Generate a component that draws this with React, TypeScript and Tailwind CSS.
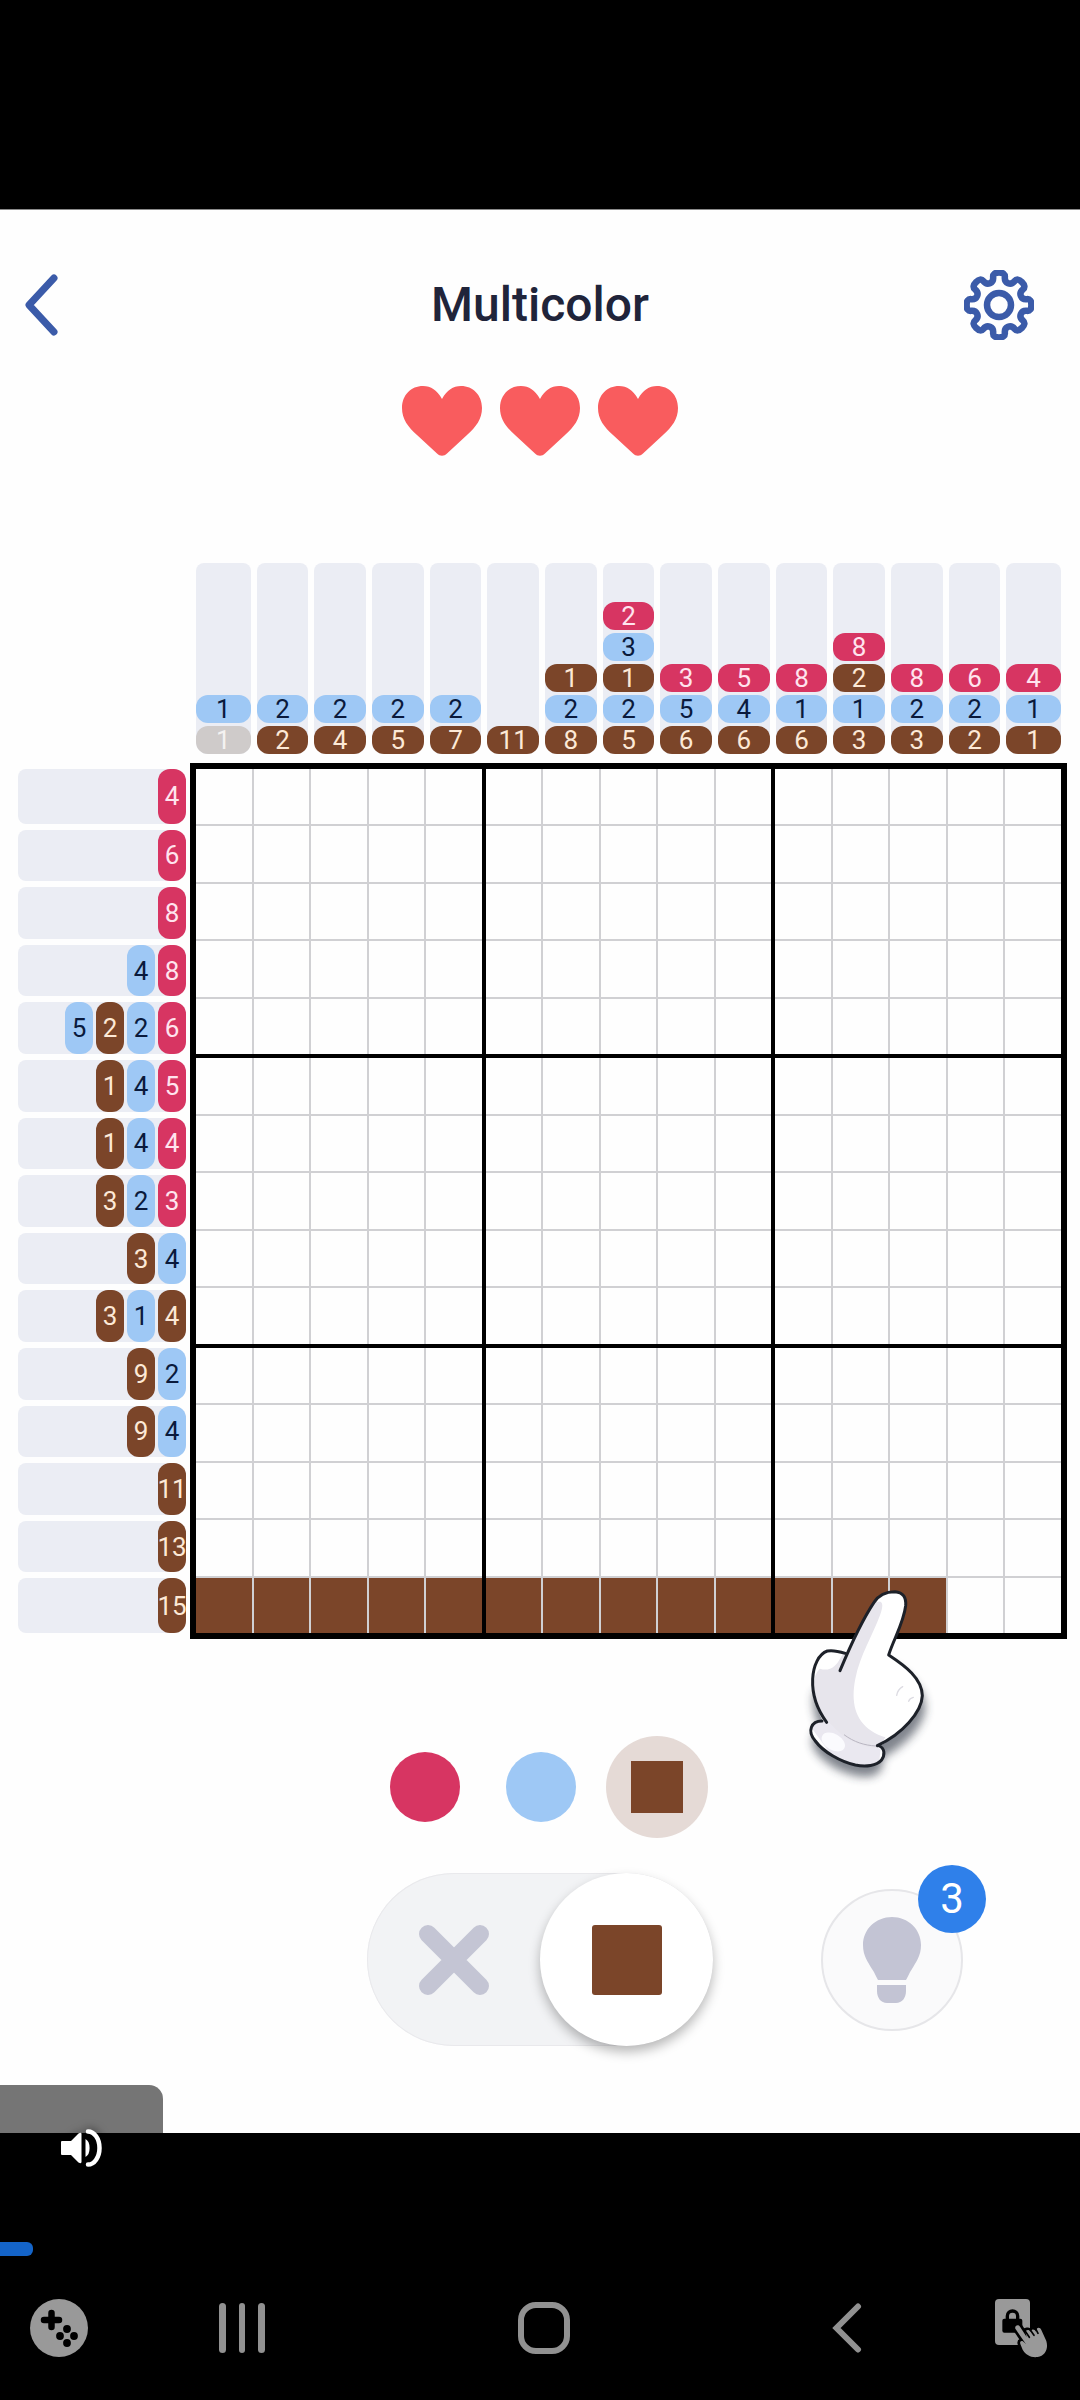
import React, { useState } from "react";

type Tone = "pink" | "blue" | "brown" | "done";
type Clue = [number, Tone];

const P = (n: number): Clue => [n, "pink"];
const B = (n: number): Clue => [n, "blue"];
const N = (n: number): Clue => [n, "brown"];
const D = (n: number): Clue => [n, "done"];

const columnClues: Clue[][] = [
  [B(1), D(1)],
  [B(2), N(2)],
  [B(2), N(4)],
  [B(2), N(5)],
  [B(2), N(7)],
  [N(11)],
  [N(1), B(2), N(8)],
  [P(2), B(3), N(1), B(2), N(5)],
  [P(3), B(5), N(6)],
  [P(5), B(4), N(6)],
  [P(8), B(1), N(6)],
  [P(8), N(2), B(1), N(3)],
  [P(8), B(2), N(3)],
  [P(6), B(2), N(2)],
  [P(4), B(1), N(1)],
];

const rowClues: Clue[][] = [
  [P(4)],
  [P(6)],
  [P(8)],
  [B(4), P(8)],
  [B(5), N(2), B(2), P(6)],
  [N(1), B(4), P(5)],
  [N(1), B(4), P(4)],
  [N(3), B(2), P(3)],
  [N(3), B(4)],
  [N(3), B(1), N(4)],
  [N(9), B(2)],
  [N(9), B(4)],
  [N(11)],
  [N(13)],
  [N(15)],
];

const toneClass: Record<Tone, string> = {
  pink: "bg-[#d73562] text-[#ffe4ee]",
  blue: "bg-[#9ec8f5] text-[#0a1a3c]",
  brown: "bg-[#7b4529] text-[#fde9d6]",
  done: "bg-[#cfcbca] text-[#f4f2f1]",
};

const SIZE = 15;
const BLOCK = 5;

function gearPath(): string {
  const pts: [number, number][] = [];
  for (let i = 0; i < 8; i++) {
    const base = i * 45 - 90;
    const corners: [number, number][] = [
      [33, -11],
      [33, 11],
      [24, 13],
      [24, 32],
    ];
    for (const [r, a] of corners) {
      const t = ((base + a) * Math.PI) / 180;
      pts.push([35 + r * Math.cos(t), 35 + r * Math.sin(t)]);
    }
  }
  const mid = (a: [number, number], b: [number, number]) =>
    `${((a[0] + b[0]) / 2).toFixed(2)} ${((a[1] + b[1]) / 2).toFixed(2)}`;
  let d = `M${mid(pts[pts.length - 1], pts[0])}`;
  pts.forEach((p, i) => {
    d += `Q${p[0].toFixed(2)} ${p[1].toFixed(2)} ${mid(p, pts[(i + 1) % pts.length])}`;
  });
  return d + "Z";
}

function Header() {
  return (
    <header className="flex items-center justify-between pt-[60px] pr-[46px] pl-[22px]">
      <button aria-label="Back" className="flex h-[70px] w-[70px] items-center text-[#3b5ba9]">
        <svg width="38" height="66" viewBox="0 0 38 66" fill="none" stroke="currentColor" strokeWidth="7" strokeLinecap="round" strokeLinejoin="round">
          <path d="M32 6 7 33 32 60" />
        </svg>
      </button>
      <h1 className="pl-[24px] text-[48px] leading-[70px] font-medium text-[#20243a]">Multicolor</h1>
      <button aria-label="Settings" className="text-[#3b5ba9]">
        <svg width="70" height="70" viewBox="0 0 70 70" fill="none" stroke="currentColor" strokeWidth="6.500" strokeLinejoin="round">
          <path d={gearPath()} />
          <circle cx="35" cy="35" r="12" />
        </svg>
      </button>
    </header>
  );
}

function Heart() {
  return (
    <svg width="80" height="70" viewBox="0 0 80 70" fill="#f95c5e" aria-hidden="true">
      <path d="M40 13C35 4 29 0 21 0 9 0 0 9 0 22c0 11 6 19 15 27l20 18.500c3 3 7 3 10 0L65 49c9-8 15-16 15-27C80 9 71 0 59 0 51 0 45 4 40 13Z" />
    </svg>
  );
}

function ColumnClues() {
  return (
    <div className="grid grid-cols-15 px-[6px]">
      {columnClues.map((clues, c) => (
        <div key={c} className="px-[3px] first:pl-0 last:pr-0">
          <div className="flex h-[191px] flex-col justify-end gap-[3px] rounded-t-lg rounded-b-xl bg-[#ebedf4]">
            {clues.map(([n, tone], i) => (
              <span key={i} className={`flex h-7 items-center justify-center rounded-xl text-[26px] leading-7 ${toneClass[tone]}`}>
                {n}
              </span>
            ))}
          </div>
        </div>
      ))}
    </div>
  );
}

function RowClues() {
  return (
    <div className="grid auto-rows-fr py-[6px]">
      {rowClues.map((clues, r) => (
        <div key={r} className="flex py-[3px] first:pt-0 last:pb-0">
          <div className="flex flex-1 justify-end gap-[3px] rounded-l-lg rounded-r-xl bg-[#ebedf4]">
            {clues.map(([n, tone], i) => (
              <span key={i} className={`flex w-7 items-center justify-center rounded-xl text-[26px] leading-7 ${toneClass[tone]}`}>
                {n}
              </span>
            ))}
          </div>
        </div>
      ))}
    </div>
  );
}

function Board() {
  const [filled, setFilled] = useState<Set<number>>(
    () => new Set(Array.from({ length: 13 }, (_, i) => 14 * SIZE + i))
  );
  const toggle = (i: number) =>
    setFilled((prev) => {
      const next = new Set(prev);
      if (next.has(i)) next.delete(i);
      else next.add(i);
      return next;
    });
  return (
    <div className="grid aspect-[877/876] grid-cols-3 grid-rows-3 gap-1 bg-black p-[6px]">
      {Array.from({ length: 9 }, (_, b) => (
        <div key={b} className="grid grid-cols-5 grid-rows-5 gap-[2px] bg-[#d0d0d3]">
          {Array.from({ length: BLOCK * BLOCK }, (_, k) => {
            const r = Math.floor(b / 3) * BLOCK + Math.floor(k / BLOCK);
            const c = (b % 3) * BLOCK + (k % BLOCK);
            const i = r * SIZE + c;
            return (
              <button
                key={k}
                aria-label={`Row ${r + 1}, column ${c + 1}`}
                aria-pressed={filled.has(i)}
                onClick={() => toggle(i)}
                className={filled.has(i) ? "bg-[#7b4529]" : "bg-[#fefefe]"}
              />
            );
          })}
        </div>
      ))}
    </div>
  );
}

function Hand() {
  return (
    <svg
      className="pointer-events-none absolute right-[127px] -bottom-[151px]"
      width="140"
      height="210"
      viewBox="180 120 420 630"
      aria-hidden="true"
    >
      <defs>
        <filter id="hand-shadow" x="-30%" y="-30%" width="160%" height="160%">
          <feGaussianBlur stdDeviation="14" />
        </filter>
        <clipPath id="hand-shape">
          <path d="M316 340C345 285 375 225 402 187 417 163 440 155 465 155c25 2 34 18 32 42-6 52-36 100-51 148 50 33 100 70 101 122-2 50-60 115-127 150 18 14 15 35 4 46-14 18-52 15-84 9-45-10-97-40-120-72-18-25-8-50 14-56l14-2c-20-38-34-80-32-125 4-40 20-75 46-84 18-4 38 2 54 7Z" />
        </clipPath>
      </defs>
      <path
        d="M222 440c-8 50 10 90 20 112-32 12-35 50 0 84 50 50 150 80 178 40 10-14 10-28 6-38 60-30 125-90 130-150 0-50-40-90-100-130Z"
        fill="#2b3040"
        opacity="0.6"
        filter="url(#hand-shadow)"
        transform="translate(0 16)"
      />
      <g clipPath="url(#hand-shape)">
        <rect x="180" y="120" width="420" height="630" fill="#ffffff" />
        <path d="M400 190c22-12 36-8 20 36-22 60-60 120-74 190-18 90 10 150 90 176l-20 34c-70 0-120-40-160-90-30-50-50-120-16-150 30 10 50-10 60-30Z" fill="#e7e5ec" />
        <path d="M212 560c10-20 40-20 60-8 40 46 90 70 150 74l-6 54H300Z" fill="#eae8f0" />
        <ellipse cx="280" cy="606" rx="38" ry="24" fill="#fbfbfe" transform="rotate(30 280 606)" />
      </g>
      <g fill="none" stroke="#1d2129" strokeWidth="9" strokeLinecap="round" strokeLinejoin="round">
        <path d="M300 392C332 315 370 235 402 187 417 163 440 155 465 155c25 2 34 18 32 42-6 52-36 100-51 148 50 33 100 70 101 122-2 50-60 115-135 150" />
        <path d="M316 340c-16-5-36-11-54-7-26 9-42 44-44 84-2 45 14 92 42 130" />
        <path d="M246 543c-32 0-46 30-20 60 23 32 75 62 120 72 32 6 64 2 78-14 12-16 10-36-6-43" />
      </g>
      <path d="M312 584c30 22 60 32 96 34" fill="none" stroke="#b9b6c2" strokeWidth="3" />
      <path d="M470 466c2-12 8-20 18-26M506 484c2-6 6-10 14-12" fill="none" stroke="#dcdbe2" strokeWidth="4" strokeLinecap="round" />
    </svg>
  );
}

function Palette() {
  return (
    <div className="mt-[97px] flex justify-center gap-[14px] pl-[2px]">
      <button aria-label="Pink" className="flex size-[102px] items-center justify-center rounded-full">
        <span className="size-[70px] rounded-full bg-[#d73562]" />
      </button>
      <button aria-label="Blue" className="flex size-[102px] items-center justify-center rounded-full">
        <span className="size-[70px] rounded-full bg-[#9ec8f5]" />
      </button>
      <button aria-label="Brown" aria-pressed="true" className="flex size-[102px] items-center justify-center rounded-full bg-[#e5dad6]">
        <span className="size-[52px] bg-[#7b4529]" />
      </button>
    </div>
  );
}

function Tools() {
  return (
    <div className="mt-[35px] grid grid-cols-[1fr_346px_1fr] items-center">
      <div className="col-start-2 flex rounded-full bg-[#f2f3f5] ring-1 ring-[#e9e9ec] ring-inset">
        <button aria-label="Mark empty" className="flex size-[173px] items-center justify-center">
          <svg width="70" height="70" viewBox="0 0 70 70" stroke="#c4c5d4" strokeWidth="18" strokeLinecap="round">
            <path d="M9 9 61 61M61 9 9 61" />
          </svg>
        </button>
        <button aria-label="Fill" aria-pressed="true" className="flex size-[173px] items-center justify-center rounded-full bg-white shadow-[0_6px_12px_rgba(0,0,0,0.28)]">
          <span className="size-[70px] rounded-[3px] bg-[#7b4529]" />
        </button>
      </div>
      <button aria-label="Hint, 3 left" className="relative ml-[108px] flex size-[142px] items-center justify-center rounded-full border-2 border-[#e6e6e9] bg-[#fafafb]">
        <svg width="58" height="86" viewBox="0 0 58 86" fill="#c3c4d4">
          <path d="M29 0C13 0 0 12 0 28c0 11 5 17 9 24 3 4 4 8 6 11h28c2-3 3-7 6-11 4-7 9-13 9-24C58 12 45 0 29 0ZM14 68h29v6c0 7-4 12-10 12h-9c-6 0-10-5-10-12Z" />
        </svg>
        <span className="absolute -top-[26px] -right-[25px] flex size-[68px] items-center justify-center rounded-full bg-[#2f80ea] text-[42px] leading-none text-white">
          3
        </span>
      </button>
    </div>
  );
}

function NavBar() {
  return (
    <nav aria-label="System" className="grid h-36 grid-cols-[118px_248fr_356fr_250fr_108px] items-center justify-items-center">
      <button aria-label="Game tools">
        <svg width="58" height="58" viewBox="0 0 58 58">
          <circle cx="29" cy="29" r="29" fill="#999" />
          <path d="M21.500 14v14M14 21h15" stroke="#000" strokeWidth="6.500" strokeLinecap="round" />
          <circle cx="37" cy="30" r="3.900" />
          <circle cx="30" cy="37" r="3.900" />
          <circle cx="44" cy="37" r="3.900" />
          <circle cx="37" cy="44" r="3.900" />
        </svg>
      </button>
      <button aria-label="Recent apps">
        <svg width="48" height="50" viewBox="0 0 48 50" fill="#919191">
          <rect x="1" width="7" height="50" rx="3.500" />
          <rect x="21" width="6" height="50" rx="3" />
          <rect x="40" width="7" height="50" rx="3.500" />
        </svg>
      </button>
      <button aria-label="Home">
        <svg width="52" height="52" viewBox="0 0 52 52" fill="none" stroke="#919191" strokeWidth="6">
          <rect x="3" y="3" width="46" height="46" rx="15" />
        </svg>
      </button>
      <button aria-label="Go back">
        <svg width="30" height="50" viewBox="0 0 30 50" fill="none" stroke="#919191" strokeWidth="6" strokeLinecap="round">
          <path d="M26 3.500 4.500 25 26 46.500" />
        </svg>
      </button>
      <button aria-label="Lock touches" className="pr-2.5">
        <svg width="53" height="59" viewBox="105 87 159 177" fill="#999">
          <rect x="105" y="87" width="105" height="138" rx="12" />
          <rect x="127" y="146" width="60" height="42" rx="6" fill="#000" />
          <path d="M142 150v-12c0-20 31-20 31 0v12" fill="none" stroke="#000" strokeWidth="10" />
          <path
            d="M166 176c-3-9 8-15 14-6l20 31-3-13c-1-8 9-11 14-3l2-2c3-7 11-6 15 2l2-8c4-6 11-4 14 3l15 33c7 24-4 44-26 48-20 3-37-8-45-22l-7-17c-3-9 5-13 11-5l6 6Z"
            stroke="#000"
            strokeWidth="16"
            strokeLinejoin="round"
            paintOrder="stroke"
          />
          <path d="M196 184l12 18M211 180l11 16M226 174l8 16" stroke="#000" strokeWidth="5" strokeLinecap="round" />
        </svg>
      </button>
    </nav>
  );
}

export default function App() {
  return (
    <div className="min-h-screen bg-black pt-[209px] font-[Roboto,'Liberation_Sans',sans-serif]">
      <main className="border-t border-[#8a8a8a] bg-[#fefefe]">
        <Header />
        <div className="mt-[46px] flex justify-center gap-[18px]" role="img" aria-label="3 lives left">
          <Heart />
          <Heart />
          <Heart />
        </div>
        <section className="mt-[107px] grid grid-cols-[168px_1fr] gap-x-1 gap-y-[9px] pr-[13px] pl-[18px]">
          <div className="col-start-2">
            <ColumnClues />
          </div>
          <RowClues />
          <div className="relative">
            <Board />
            <Hand />
          </div>
        </section>
        <Palette />
        <Tools />
        <button aria-label="Mute" className="relative z-10 mt-[39px] block h-12 w-[163px] rounded-tr-[14px] bg-[#757575]">
          <svg className="absolute -bottom-[34px] left-[61px] drop-shadow-[0_0_5px_rgba(0,0,0,0.7)]" width="42" height="38" viewBox="0 0 42 38" fill="#fff">
            <path d="M1 12h9l7.500-7.500Q20.500 3 20.500 5v28q0 2-3 .500L10 26H1q-1 0-1-1V13q0-1 1-1ZM24.500 10a6 9.500 0 0 1 0 18Z" />
            <path d="M27 2.500a11.500 16.500 0 0 1 0 33" fill="none" stroke="#fff" strokeWidth="4.500" strokeLinecap="round" />
          </svg>
        </button>
      </main>
      <footer className="bg-black pt-[109px]">
        <div role="progressbar" aria-label="Playback" aria-valuenow={3} aria-valuemin={0} aria-valuemax={100} className="h-[14px]">
          <div className="h-full rounded-r-md bg-[#1464c8]" style={{ width: "3.1%" }} />
        </div>
        <NavBar />
      </footer>
    </div>
  );
}
